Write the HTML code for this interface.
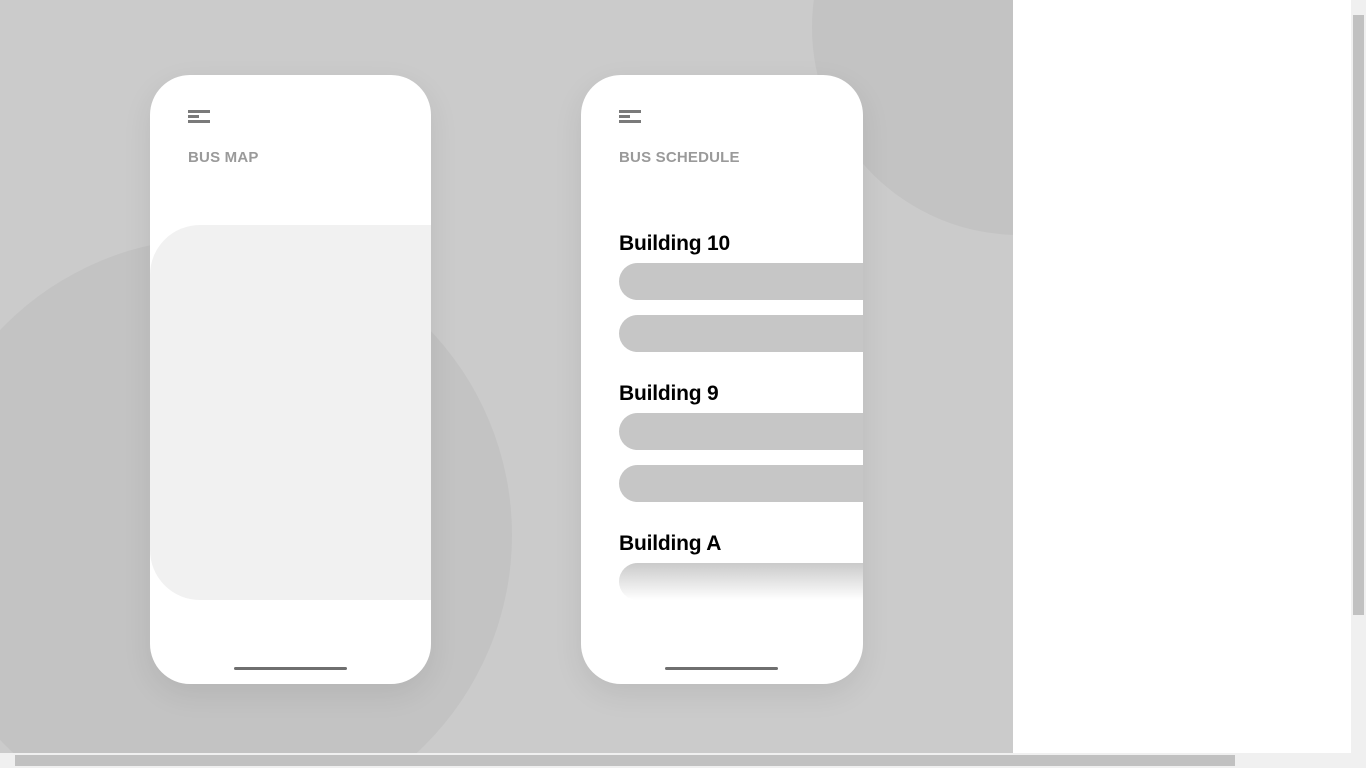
<!DOCTYPE html>
<html><head><style>
html,body{margin:0;padding:0;width:1366px;height:768px;overflow:hidden;background:#fff;font-family:"Liberation Sans",sans-serif}
.bg{position:absolute;left:0;top:0;width:1013px;height:753px;background:#cbcbcb;overflow:hidden}
.c1{position:absolute;left:-82px;top:238px;width:594px;height:594px;border-radius:50%;background:#c3c3c3}
.c2{position:absolute;left:812px;top:-180px;width:415px;height:415px;border-radius:50%;background:#c3c3c3}
.phone{position:absolute;top:75px;width:281px;height:609px;background:#fff;border-radius:40px;overflow:hidden;box-shadow:0 10px 30px rgba(0,0,0,0.08)}
.ham{position:absolute;left:38px;top:35px}
.ham i{display:block;height:3px;background:#7a7a7a;margin-bottom:2px}
.title{position:absolute;left:38px;top:74px;font-size:15px;font-weight:bold;color:#9a9a9a;letter-spacing:0.2px}
.bar{position:absolute;left:84px;bottom:14px;width:113px;height:3px;background:#6f6f6f;border-radius:2px}
.map{position:absolute;left:0;top:150px;width:281px;height:375px;background:#f1f1f1;border-radius:50px 0 0 50px}
.h{position:absolute;left:38px;font-size:21px;font-weight:bold;color:#000;letter-spacing:-0.2px}
.pill{position:absolute;left:38px;width:300px;height:37px;background:#c6c6c6;border-radius:19px}
</style></head><body>
<div class="bg"><div class="c1"></div><div class="c2"></div>
<div class="phone" style="left:150px">
<div class="ham"><i style="width:22px"></i><i style="width:11px"></i><i style="width:22px"></i></div>
<div class="title">BUS MAP</div>
<div class="map"></div>
<div class="bar"></div>
</div>
<div class="phone" style="left:581px;width:282px">
<div class="ham"><i style="width:22px"></i><i style="width:11px"></i><i style="width:22px"></i></div>
<div class="title">BUS SCHEDULE</div>
<div class="h" style="top:157px">Building 10</div>
<div class="pill" style="top:188px"></div>
<div class="pill" style="top:240px"></div>
<div class="h" style="top:307px">Building 9</div>
<div class="pill" style="top:338px"></div>
<div class="pill" style="top:390px"></div>
<div class="h" style="top:457px">Building A</div>
<div class="pill" style="top:488px;background:linear-gradient(#cacaca,#fff)"></div>
<div class="bar"></div>
</div>
</div>
<div style="position:absolute;left:1351px;top:0;width:15px;height:753px;background:#f0f0f0"><div style="position:absolute;left:2px;top:15px;width:11px;height:600px;background:#c1c1c1"></div></div>
<div style="position:absolute;left:0;top:753px;width:1366px;height:15px;background:#f0f0f0"><div style="position:absolute;left:15px;top:2px;width:1220px;height:11px;background:#c1c1c1"></div></div>
</body></html>
